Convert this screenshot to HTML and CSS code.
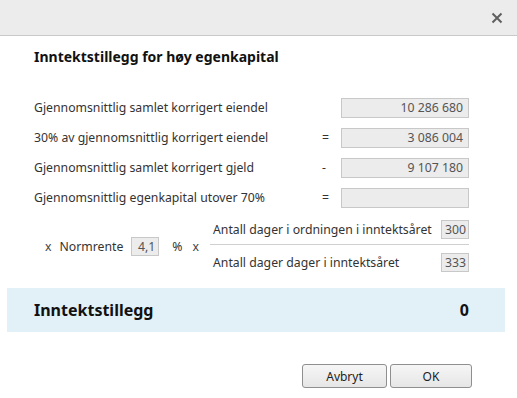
FILE: index.html
```html
<!DOCTYPE html>
<html lang="no">
<head>
  <meta charset="UTF-8" />
  <title>Inntektstillegg for høy egenkapital</title>
  <link rel="stylesheet" href="styles.css">
</head>
<body>
  <div class="dialog">
    <!-- Title bar -->
    <div class="titlebar">
      <button class="close" title="Lukk">
        <svg width="12" height="12" viewBox="0 0 12 12">
          <path d="M1.5 1.5 L10.5 10.5 M10.5 1.5 L1.5 10.5" stroke="#5f5f5f" stroke-width="2" fill="none" />
        </svg>
      </button>
    </div>

    <div class="content">
      <h1 class="heading">Inntektstillegg for høy egenkapital</h1>

      <!-- Calculation rows -->
      <div class="calc">
        <span class="label">Gjennomsnittlig samlet korrigert eiendel</span>
        <span class="op"></span>
        <div class="field">10 286 680</div>

        <span class="label">30% av gjennomsnittlig korrigert eiendel</span>
        <span class="op">=</span>
        <div class="field">3 086 004</div>

        <span class="label">Gjennomsnittlig samlet korrigert gjeld</span>
        <span class="op">-</span>
        <div class="field">9 107 180</div>

        <span class="label">Gjennomsnittlig egenkapital utover 70%</span>
        <span class="op">=</span>
        <div class="field"></div>
      </div>

      <!-- Rate and day fraction -->
      <div class="rate">
        <span class="mult">x</span>
        <span class="rate-label">Normrente</span>
        <div class="field small">4,1</div>
        <span class="pct">%</span>
        <span class="mult last">x</span>
        <div class="fraction">
          <div class="frac-row top">
            <span>Antall dager i ordningen i inntektsåret</span>
            <div class="field small">300</div>
          </div>
          <div class="frac-row">
            <span>Antall dager dager i inntektsåret</span>
            <div class="field small">333</div>
          </div>
        </div>
      </div>
    </div>

    <!-- Result -->
    <div class="result">
      <span>Inntektstillegg</span>
      <span>0</span>
    </div>

    <div class="actions">
      <button class="btn">Avbryt</button>
      <button class="btn ok">OK</button>
    </div>
  </div>
</body>
</html>
```

FILE: styles.css
```css
* {
  margin: 0;
  padding: 0;
  box-sizing: border-box;
}
body {
  font-family: 'Noto Sans', 'Open Sans', sans-serif;
  font-size: 12.25px;
  color: #333;
  background: #fff;
}
.dialog {
  width: 517px;
  height: 398px;
  background: #fff;
}
.titlebar {
  height: 36px;
  background: #ececec;
  border-bottom: 1px solid #c9c9c9;
  display: flex;
  justify-content: flex-end;
  align-items: center;
  padding-right: 12px;
}
.close {
  background: none;
  border: none;
  width: 16px;
  height: 16px;
  display: flex;
  align-items: center;
  justify-content: center;
  cursor: pointer;
}
.content {
  padding: 0 48px 0 34px;
}
.heading {
  font-size: 14px;
  font-weight: bold;
  color: #111;
  line-height: 18px;
  margin-top: 12px;
}
.calc {
  margin-top: 32px;
  display: grid;
  grid-template-columns: 1fr 20px 128px;
  grid-auto-rows: 20px;
  row-gap: 10px;
  align-items: center;
}
.label {
  color: #333;
  line-height: 20px;
}
.op {
  color: #333;
  line-height: 20px;
  padding-left: 1px;
}
.field {
  height: 20px;
  background: #ececec;
  border: 1px solid #c8c8c8;
  color: #555;
  text-align: right;
  padding: 0 5px;
  line-height: 18px;
}
.field.small {
  width: 28px;
  height: 19px;
  line-height: 17px;
  padding: 0 3px;
}

/* Rate row */
.rate {
  margin-top: 12px;
  padding-left: 11px;
  display: flex;
  align-items: center;
}
.mult {
  color: #444;
}
.rate-label {
  margin-left: 8px;
  margin-right: 8px;
}
.pct {
  margin-left: 13px;
  margin-right: 10px;
}
.mult.last {
  margin-right: 11px;
}
.fraction {
  flex: 1;
}
.frac-row {
  display: flex;
  justify-content: space-between;
  align-items: center;
  height: 20px;
  padding-left: 3px;
}
.frac-row.top {
  height: 25px;
  padding-bottom: 5px;
  border-bottom: 1px solid #d0d0d0;
  margin-bottom: 7px;
}

/* Result band */
.result {
  margin: 16px 12px 0 7px;
  height: 44px;
  background: #e2f0f8;
  display: flex;
  justify-content: space-between;
  align-items: center;
  padding: 0 36px 0 27px;
  font-size: 16px;
  font-weight: bold;
  color: #111;
}

.actions {
  margin-top: 32px;
  padding-right: 45px;
  display: flex;
  justify-content: flex-end;
  gap: 3px;
}
.btn {
  width: 85px;
  height: 24px;
  font-family: 'Noto Sans', 'Open Sans', sans-serif;
  font-size: 12px;
  color: #222;
  background: linear-gradient(to bottom, #f6f6f6, #e6e6e6);
  border: 1px solid #8f8f8f;
  border-radius: 3px;
  cursor: pointer;
}
.btn.ok {
  width: 82px;
}
```
